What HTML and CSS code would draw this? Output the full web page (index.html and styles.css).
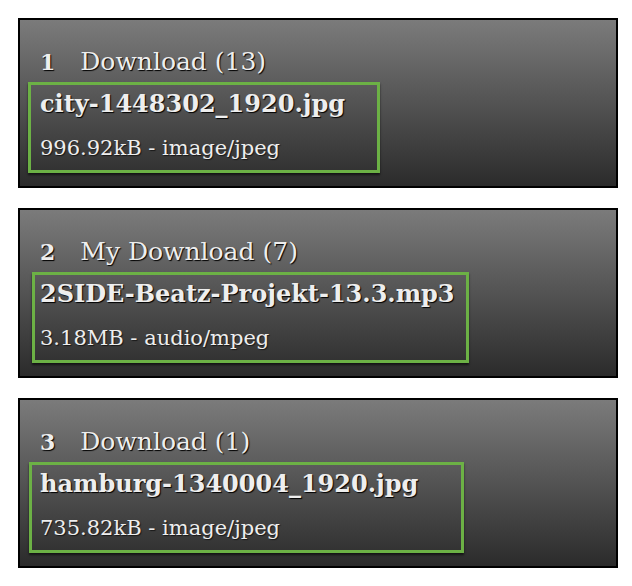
FILE: index.html
```html
<!DOCTYPE html>
<html>
<head>
<meta charset="utf-8">
<link rel="stylesheet" href="styles.css">
</head>
<body>
<div class="list">
  <div class="card">
    <div class="title"><span class="num">1</span><span class="name">Download (13)</span></div>
    <div class="file file-city">
      <div class="fname">city-1448302_1920.jpg</div>
      <div class="meta">996.92kB - image/jpeg</div>
    </div>
  </div>
  <div class="card">
    <div class="title"><span class="num">2</span><span class="name">My Download (7)</span></div>
    <div class="file file-beatz">
      <div class="fname">2SIDE-Beatz-Projekt-13.3.mp3</div>
      <div class="meta">3.18MB - audio/mpeg</div>
    </div>
  </div>
  <div class="card">
    <div class="title"><span class="num">3</span><span class="name">Download (1)</span></div>
    <div class="file file-hamburg">
      <div class="fname">hamburg-1340004_1920.jpg</div>
      <div class="meta">735.82kB - image/jpeg</div>
    </div>
  </div>
</div>
</body>
</html>
```

FILE: styles.css
```css
html, body {
  margin: 0;
  padding: 0;
  background: #fff;
}
body {
  font-family: "DejaVu Serif", "Liberation Serif", serif;
  color: #eeeeee;
}
.list {
  display: flex;
  flex-direction: column;
  gap: 20px;
  padding: 18px 14px 0 18px;
}
.card {
  box-sizing: border-box;
  width: 600px;
  height: 170px;
  border: 2px solid #000;
  background: linear-gradient(to bottom, #7b7b7b 0%, #2b2b2b 100%);
  padding: 24px 0 0 0;
}
.title {
  padding-left: 20px;
  font-size: 25px;
  line-height: 36px;
  height: 36px;
  margin-bottom: 2px;
  white-space: nowrap;
  text-shadow: 1px 1px 1px #000;
}
.num {
  display: inline-block;
  font-weight: bold;
  font-size: 22px;
  line-height: 1;
  margin-right: 25px;
}
.name {
  font-size: 25px;
}
.file {
  box-sizing: border-box;
  border: 3px solid #6cb145;
  height: 91px;
  box-shadow: 0 2px 2px rgba(0, 0, 0, 0.6);
  white-space: nowrap;
}
.file-city {
  margin-left: 8px;
  width: 352px;
  padding-left: 9px;
}
.file-beatz {
  margin-left: 12px;
  width: 437px;
  padding-left: 5px;
}
.file-hamburg {
  margin-left: 9px;
  width: 435px;
  padding-left: 8px;
}
.fname {
  font-weight: bold;
  font-size: 24px;
  line-height: 37px;
  text-shadow: 1px 1px 1px #000;
}
.meta {
  font-size: 21px;
  line-height: 24px;
  margin-top: 14px;
  text-shadow: 1px 1px 1px rgba(0, 0, 0, 0.6);
}
```
